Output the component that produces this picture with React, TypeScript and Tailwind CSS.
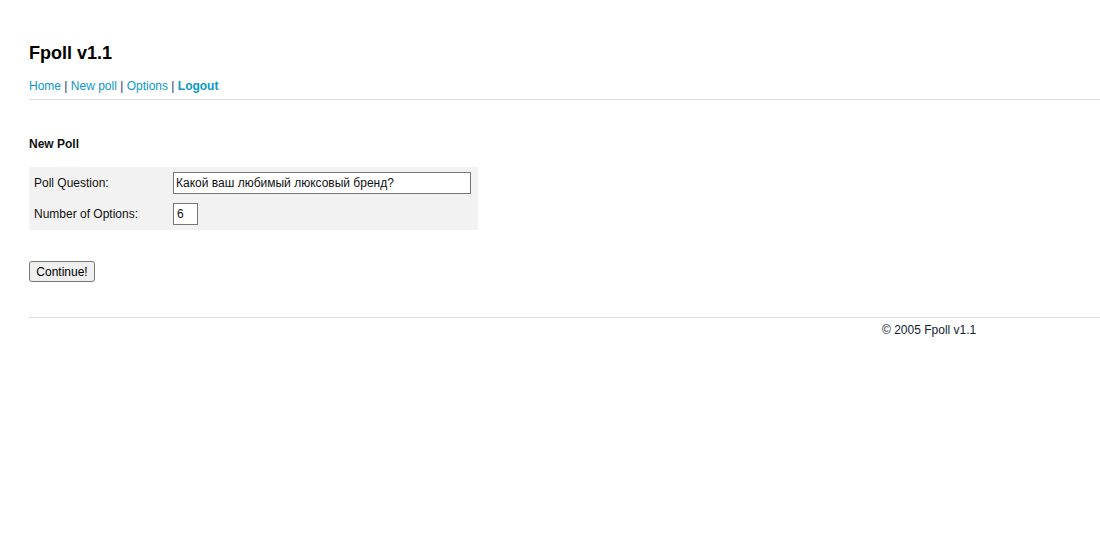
export default function App() {
  return (
    <div className="min-h-screen bg-white pl-[29px] pt-[43px] text-[12px] text-black" style={{ fontFamily: '"Liberation Sans", Arial, sans-serif' }}>
      <h1 className="text-[18px] font-bold leading-[20px]">Fpoll v1.1</h1>
      <div className="mt-[16px] leading-[15px] text-[#333366]">
        <a className="text-[#0a99c6]" href="#">Home</a> | <a className="text-[#0a99c6]" href="#">New poll</a> |{" "}
        <a className="text-[#0a99c6]" href="#">Options</a> | <a className="font-bold text-[#0a99c6]" href="#">Logout</a>
      </div>
      <div className="mt-[5px] h-px bg-[#dddddd]" />
      <h2 className="mt-[37px] font-bold leading-[15px] text-[#111111]">New Poll</h2>
      <div className="mt-[15px] w-[449px] bg-[#f2f2f2] px-[5px] py-[5px] text-[#111111]">
        <div className="flex h-[22px] items-center">
          <span className="w-[139px]">Poll Question:</span>
          <input
            className="h-[22px] w-[298px] border border-[#767676] bg-white px-[2px] text-[12px] outline-none"
            defaultValue="Какой ваш любимый люксовый бренд?"
          />
        </div>
        <div className="mt-[9px] flex h-[22px] items-center">
          <span className="w-[139px]">Number of Options:</span>
          <input className="h-[22px] w-[25px] border border-[#767676] bg-white px-[3px] text-[12px] outline-none" defaultValue="6" />
        </div>
      </div>
      <button className="mt-[31px] h-[21px] w-[66px] rounded-[3px] border border-[#767676] bg-[#efefef] text-[12px] leading-none text-black">
        Continue!
      </button>
      <div className="mt-[35px] h-px bg-[#dddddd]" />
      <div className="mt-[5px] pl-[853px] leading-[15px] text-[#112233]">© 2005 Fpoll v1.1</div>
    </div>
  );
}
